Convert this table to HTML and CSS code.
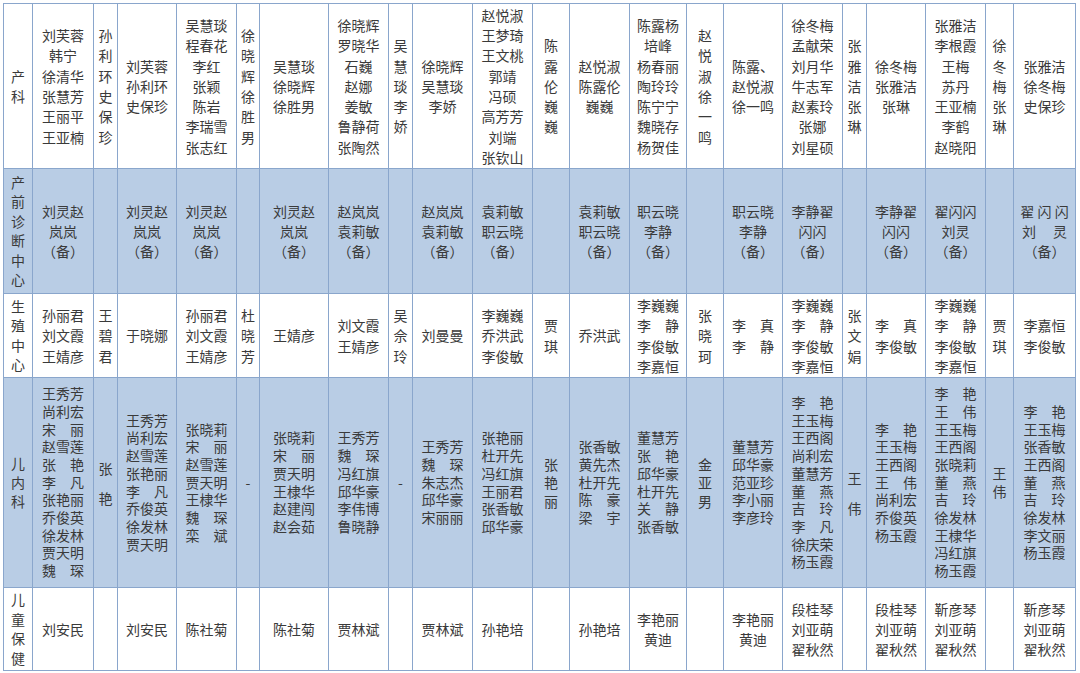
FILE: index.html
```html
<!DOCTYPE html>
<html lang="zh-CN">
<head>
<meta charset="utf-8">
<title>排班表</title>
<link rel="stylesheet" href="styles.css">
</head>
<body>
<div class="wrap">
<table class="roster">
<colgroup>
<col class="w29"><col class="w61"><col class="w24"><col class="w59"><col class="w60"><col class="w23"><col class="w69"><col class="w60"><col class="w24"><col class="w60"><col class="w60"><col class="w37"><col class="w60"><col class="w57"><col class="w37"><col class="w59"><col class="w60"><col class="w24"><col class="w59"><col class="w60"><col class="w28"><col class="w62">
</colgroup>
<tbody>
<tr class="r1">
<td><span>产</span><span>科</span></td>
<td><span>刘芙蓉</span><span>韩宁</span><span>徐清华</span><span>张慧芳</span><span>王丽平</span><span>王亚楠</span></td>
<td><span>孙</span><span>利</span><span>环</span><span>史</span><span>保</span><span>珍</span></td>
<td><span>刘芙蓉</span><span>孙利环</span><span>史保珍</span></td>
<td><span>吴慧琰</span><span>程春花</span><span>李红</span><span>张颖</span><span>陈岩</span><span>李瑞雪</span><span>张志红</span></td>
<td><span>徐</span><span>晓</span><span>辉</span><span>徐</span><span>胜</span><span>男</span></td>
<td><span>吴慧琰</span><span>徐晓辉</span><span>徐胜男</span></td>
<td><span>徐晓辉</span><span>罗晓华</span><span>石巍</span><span>赵娜</span><span>姜敏</span><span>鲁静荷</span><span>张陶然</span></td>
<td><span>吴</span><span>慧</span><span>琰</span><span>李</span><span>娇</span></td>
<td><span>徐晓辉</span><span>吴慧琰</span><span>李娇</span></td>
<td><span>赵悦淑</span><span>王梦琦</span><span>王文桃</span><span>郭靖</span><span>冯硕</span><span>高芳芳</span><span>刘端</span><span>张钦山</span></td>
<td><span>陈</span><span>露</span><span>伦</span><span>巍</span><span>巍</span></td>
<td><span>赵悦淑</span><span>陈露伦</span><span>巍巍</span></td>
<td><span>陈露杨</span><span>培峰</span><span>杨春丽</span><span>陶玲玲</span><span>陈宁宁</span><span>魏晓存</span><span>杨贺佳</span></td>
<td><span>赵</span><span>悦</span><span>淑</span><span>徐</span><span>一</span><span>鸣</span></td>
<td><div class="lblock"><span>陈露、</span><span>赵悦淑</span><span>徐一鸣</span></div></td>
<td><span>徐冬梅</span><span>孟献荣</span><span>刘月华</span><span>牛志军</span><span>赵素玲</span><span>张娜</span><span>刘星硕</span></td>
<td><span>张</span><span>雅</span><span>洁</span><span>张</span><span>琳</span></td>
<td><span>徐冬梅</span><span>张雅洁</span><span>张琳</span></td>
<td><span>张雅洁</span><span>李根霞</span><span>王梅</span><span>苏丹</span><span>王亚楠</span><span>李鹤</span><span>赵晓阳</span></td>
<td><span>徐</span><span>冬</span><span>梅</span><span>张</span><span>琳</span></td>
<td><span>张雅洁</span><span>徐冬梅</span><span>史保珍</span></td>
</tr>
<tr class="r2">
<td class="lab"><span>产</span><span>前</span><span>诊</span><span>断</span><span>中</span><span>心</span></td>
<td><span>刘灵赵</span><span>岚岚</span><span>（备）</span></td>
<td></td>
<td><span>刘灵赵</span><span>岚岚</span><span>（备）</span></td>
<td><span>刘灵赵</span><span>岚岚</span><span>（备）</span></td>
<td></td>
<td><span>刘灵赵</span><span>岚岚</span><span>（备）</span></td>
<td><span>赵岚岚</span><span>袁莉敏</span><span>（备）</span></td>
<td></td>
<td><span>赵岚岚</span><span>袁莉敏</span><span>（备）</span></td>
<td><span>袁莉敏</span><span>职云晓</span><span>（备）</span></td>
<td></td>
<td><span>袁莉敏</span><span>职云晓</span><span>（备）</span></td>
<td><span>职云晓</span><span>李静</span><span>（备）</span></td>
<td></td>
<td><span>职云晓</span><span>李静</span><span>（备）</span></td>
<td><span>李静翟</span><span>闪闪</span><span>（备）</span></td>
<td></td>
<td><span>李静翟</span><span>闪闪</span><span>（备）</span></td>
<td><span>翟闪闪</span><span>刘灵</span><span>（备）</span></td>
<td></td>
<td><span>翟 闪 闪</span><span>刘　 灵</span><span>（备）</span></td>
</tr>
<tr class="r3">
<td class="lab"><span>生</span><span>殖</span><span>中</span><span>心</span></td>
<td><span>孙丽君</span><span>刘文霞</span><span>王婧彦</span></td>
<td><span>王</span><span>碧</span><span>君</span></td>
<td><span>于晓娜</span></td>
<td><span>孙丽君</span><span>刘文霞</span><span>王婧彦</span></td>
<td><span>杜</span><span>晓</span><span>芳</span></td>
<td><span>王婧彦</span></td>
<td><span>刘文霞</span><span>王婧彦</span></td>
<td><span>吴</span><span>佘</span><span>玲</span></td>
<td><span>刘曼曼</span></td>
<td><span>李巍巍</span><span>乔洪武</span><span>李俊敏</span></td>
<td><span>贾</span><span>琪</span></td>
<td><span>乔洪武</span></td>
<td><span>李巍巍</span><span>李　静</span><span>李俊敏</span><span>李嘉恒</span></td>
<td><span>张</span><span>晓</span><span>珂</span></td>
<td><span>李　真</span><span>李　静</span></td>
<td><span>李巍巍</span><span>李　静</span><span>李俊敏</span><span>李嘉恒</span></td>
<td><span>张</span><span>文</span><span>娟</span></td>
<td><span>李　真</span><span>李俊敏</span></td>
<td><span>李巍巍</span><span>李　静</span><span>李俊敏</span><span>李嘉恒</span></td>
<td><span>贾</span><span>琪</span></td>
<td><span>李嘉恒</span><span>李俊敏</span></td>
</tr>
<tr class="r4">
<td class="lab"><span>儿</span><span>内</span><span>科</span></td>
<td><span>王秀芳</span><span>尚利宏</span><span>宋　丽</span><span>赵雪莲</span><span>张　艳</span><span>李　凡</span><span>张艳丽</span><span>乔俊英</span><span>徐发林</span><span>贾天明</span><span>魏　琛</span></td>
<td class="wide"><span>张</span><span>艳</span></td>
<td><span>王秀芳</span><span>尚利宏</span><span>赵雪莲</span><span>张艳丽</span><span>李　凡</span><span>乔俊英</span><span>徐发林</span><span>贾天明</span></td>
<td><span>张晓莉</span><span>宋　丽</span><span>赵雪莲</span><span>贾天明</span><span>王棣华</span><span>魏　琛</span><span>栾　斌</span></td>
<td><span>-</span></td>
<td><span>张晓莉</span><span>宋　丽</span><span>贾天明</span><span>王棣华</span><span>赵建闯</span><span>赵会茹</span></td>
<td><span>王秀芳</span><span>魏　琛</span><span>冯红旗</span><span>邱华豪</span><span>李伟博</span><span>鲁晓静</span></td>
<td><span>-</span></td>
<td><span>王秀芳</span><span>魏　琛</span><span>朱志杰</span><span>邱华豪</span><span>宋丽丽</span></td>
<td><span>张艳丽</span><span>杜开先</span><span>冯红旗</span><span>王丽君</span><span>张香敏</span><span>邱华豪</span></td>
<td class="mid"><span>张</span><span>艳</span><span>丽</span></td>
<td><span>张香敏</span><span>黄先杰</span><span>杜开先</span><span>陈　豪</span><span>梁　宇</span></td>
<td><span>董慧芳</span><span>张　艳</span><span>邱华豪</span><span>杜开先</span><span>关　静</span><span>张香敏</span></td>
<td class="mid"><span>金</span><span>亚</span><span>男</span></td>
<td><span>董慧芳</span><span>邱华豪</span><span>范亚珍</span><span>李小丽</span><span>李彦玲</span></td>
<td><span>李　艳</span><span>王玉梅</span><span>王西阁</span><span>尚利宏</span><span>董慧芳</span><span>董　燕</span><span>吉　玲</span><span>李　凡</span><span>徐庆荣</span><span>杨玉霞</span></td>
<td class="wide low"><span>王</span><span>伟</span></td>
<td><span>李　艳</span><span>王玉梅</span><span>王西阁</span><span>王　伟</span><span>尚利宏</span><span>乔俊英</span><span>杨玉霞</span></td>
<td><span>李　艳</span><span>王　伟</span><span>王玉梅</span><span>王西阁</span><span>张晓莉</span><span>董　燕</span><span>吉　玲</span><span>徐发林</span><span>王棣华</span><span>冯红旗</span><span>杨玉霞</span></td>
<td><span>王</span><span>伟</span></td>
<td><span>李　艳</span><span>王玉梅</span><span>张香敏</span><span>王西阁</span><span>董　燕</span><span>吉　玲</span><span>徐发林</span><span>李文丽</span><span>杨玉霞</span></td>
</tr>
<tr class="r5">
<td class="lab"><span>儿</span><span>童</span><span>保</span><span>健</span></td>
<td><span>刘安民</span></td>
<td></td>
<td><span>刘安民</span></td>
<td><span>陈社菊</span></td>
<td></td>
<td><span>陈社菊</span></td>
<td><span>贾林斌</span></td>
<td></td>
<td><span>贾林斌</span></td>
<td><span>孙艳培</span></td>
<td></td>
<td><span>孙艳培</span></td>
<td><span>李艳丽</span><span>黄迪</span></td>
<td></td>
<td><span>李艳丽</span><span>黄迪</span></td>
<td><span>段桂琴</span><span>刘亚萌</span><span>翟秋然</span></td>
<td></td>
<td><span>段桂琴</span><span>刘亚萌</span><span>翟秋然</span></td>
<td><span>靳彦琴</span><span>刘亚萌</span><span>翟秋然</span></td>
<td></td>
<td><span>靳彦琴</span><span>刘亚萌</span><span>翟秋然</span></td>
</tr>
</tbody>
</table>
</div>
</body>
</html>
```

FILE: styles.css
```css
html, body {
  margin: 0;
  padding: 0;
  background: #ffffff;
}

.wrap {
  padding: 3px 0 0 3px;
}

.roster {
  border-collapse: collapse;
  table-layout: fixed;
  width: 1073px;
  font-family: "Noto Sans CJK SC", sans-serif;
  font-size: 14px;
  color: #3a3a3a;
}

.roster td {
  border: 1px solid #8aa6cc;
  padding: 0;
  text-align: center;
  vertical-align: middle;
  white-space: nowrap;
  line-height: 20px;
}

.roster td span {
  display: block;
  height: 20.3px;
  line-height: 20.3px;
  overflow: visible;
}

.w23 { width: 23px; }
.w24 { width: 24px; }
.w28 { width: 28px; }
.w29 { width: 29px; }
.w37 { width: 37px; }
.w57 { width: 57px; }
.w59 { width: 59px; }
.w60 { width: 60px; }
.w61 { width: 61px; }
.w62 { width: 62px; }
.w69 { width: 69px; }

.r1 td { height: 164px; background: #ffffff; }

.r2 td { height: 124px; background: #b9cde5; }
.r2 td span { height: 20px; line-height: 20px; }
.r2 td.lab span { height: 19.5px; line-height: 19.5px; }

.r3 td { height: 83px; background: #ffffff; }
.r3 td span { height: 20.5px; line-height: 20.5px; }
.r3 td.lab span { height: 19.5px; line-height: 19.5px; }

.r4 td { height: 209px; background: #b9cde5; }
.r4 td span { height: 17.7px; line-height: 17.7px; }
.r4 td.lab span { height: 19px; line-height: 19px; }
.r4 td.mid span { height: 18.5px; line-height: 18.5px; }
.r4 td.wide span { height: 30px; line-height: 30px; }
.r4 td.low span:first-child { margin-top: 20px; }

.r5 td { height: 82px; background: #ffffff; }
.r5 td span { height: 20px; line-height: 20px; }
.r5 td.lab span { height: 19.5px; line-height: 19.5px; }

.lblock {
  display: inline-block;
  text-align: left;
}
```
